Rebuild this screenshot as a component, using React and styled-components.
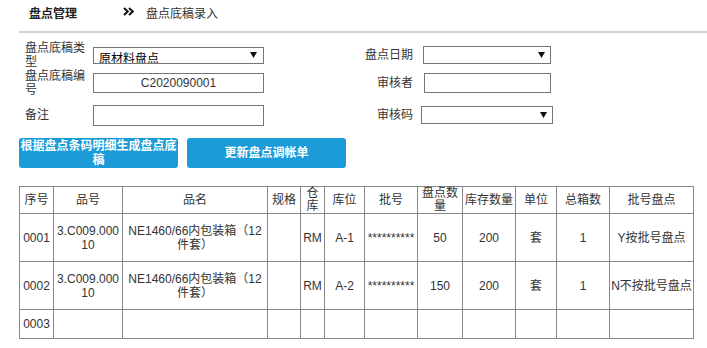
import React from "react";
import styled, { createGlobalStyle } from "styled-components";

const GlobalStyle = createGlobalStyle`
  html, body { margin: 0; padding: 0; background: #fff; }
  body {
    font-family: "Liberation Sans", "Noto Sans CJK SC", sans-serif;
    font-size: 12px;
    color: #333;
    text-spacing-trim: space-all;
  }
  * { box-sizing: border-box; }
`;

const Page = styled.div`
  width: 707px;
  height: 348px;
  overflow: hidden;
`;

const Header = styled.div`
  display: flex;
  align-items: center;
  height: 33px;
  margin-left: 19px;
  padding: 0 0 4px 10px;
  border-bottom: 2px solid #d2d2d2;
  line-height: 14px;
`;

const Title = styled.div`
  width: 94px;
  font-weight: bold;
  color: #222;
`;

const Chevron = styled.svg`
  width: 11px;
  height: 9px;
  margin: 0 12px 4px 0;
`;

const Crumb = styled.div`
  color: #333;
`;

const FormGrid = styled.div`
  display: grid;
  grid-template-columns: 68px 171px 159px auto;
  grid-template-rows: 28px 28px 36px;
  align-items: center;
  margin: 8px 0 0 25px;
`;

const Label = styled.div`
  line-height: 14px;
  color: #333;
  text-align: ${(p) => (p.$right ? "right" : "left")};
  padding-right: ${(p) => (p.$right ? "10px" : "4px")};
`;

const SelectBox = styled.div`
  display: flex;
  justify-content: space-between;
  width: ${(p) => p.$w}px;
  height: ${(p) => p.$h || 17}px;
  margin-left: ${(p) => p.$ml || 0}px;
  border: 1px solid #767676;
  background: #fff;
  overflow: hidden;
`;

const SelectText = styled.span`
  padding: 4px 0 0 5px;
  line-height: 14px;
  color: #000;
  white-space: nowrap;
`;

const Arrow = styled.svg`
  width: 7px;
  height: 6px;
  align-self: center;
  margin-right: ${(p) => p.$mr || 5}px;
  flex-shrink: 0;
`;

const TextInput = styled.input`
  display: block;
  width: ${(p) => p.$w}px;
  height: ${(p) => p.$h}px;
  margin: 0 0 0 ${(p) => p.$ml || 0}px;
  padding: 0;
  border: 1px solid #767676;
  border-radius: 0;
  font: inherit;
  font-size: 12px;
  color: #333;
  text-align: center;
  outline: none;
  background: #fff;
`;

const ButtonRow = styled.div`
  display: flex;
  gap: 9px;
  margin: 5px 0 0 19px;
`;

const ActionButton = styled.button`
  width: 159px;
  height: 30px;
  padding: 0;
  border: none;
  border-radius: 3px;
  background: #1b9bd7;
  color: #fff;
  font-family: inherit;
  font-size: 12px;
  font-weight: bold;
  line-height: 14px;
  cursor: pointer;
`;

const Table = styled.table`
  width: 675px;
  margin: 18px 0 0 19px;
  border-collapse: collapse;
  table-layout: fixed;
  border: 1px solid #888;
`;

const Row = styled.tr`
  height: ${(p) => p.$h}px;
`;

const Cell = styled.td`
  border: 1px solid #888;
  padding: 0 1px;
  text-align: center;
  vertical-align: middle;
  line-height: ${(p) => (p.$head ? 13 : 14)}px;
  word-break: break-all;
  color: #333;
  font-weight: normal;
`;

const widths = [34, 69, 145, 33, 24, 40, 53, 45, 53, 41, 53, 84];
const heads = ["序号", "品号", "品名", "规格", "仓库", "库位", "批号", "盘点数量", "库存数量", "单位", "总箱数", "批号盘点"];
const rows = [
  ["0001", "3.C009.00010", "NE1460/66内包装箱（12件套）", "", "RM", "A-1", "**********", "50", "200", "套", "1", "Y按批号盘点"],
  ["0002", "3.C009.00010", "NE1460/66内包装箱（12件套）", "", "RM", "A-2", "**********", "150", "200", "套", "1", "N不按批号盘点"],
];

const DownArrow = ({ mr }) => (
  <Arrow viewBox="0 0 7 6" $mr={mr}>
    <polygon points="0,0 7,0 3.5,6" fill="#111" />
  </Arrow>
);

export default function App() {
  return (
    <Page>
      <GlobalStyle />
      <Header>
        <Title>盘点管理</Title>
        <Chevron viewBox="0 0 11 9">
          <path d="M1 1 L4.8 4.5 L1 8 M6 1 L9.8 4.5 L6 8" fill="none" stroke="#111" strokeWidth="2" />
        </Chevron>
        <Crumb>盘点底稿录入</Crumb>
      </Header>

      <FormGrid>
        <Label>盘点底稿类型</Label>
        <SelectBox $w={171}>
          <SelectText>原材料盘点</SelectText>
          <DownArrow mr={6} />
        </SelectBox>
        <Label $right>盘点日期</Label>
        <SelectBox $w={128} $h={18}>
          <SelectText />
          <DownArrow mr={5} />
        </SelectBox>

        <Label>盘点底稿编号</Label>
        <TextInput $w={171} $h={20} readOnly value="C2020090001" />
        <Label $right>审核者</Label>
        <TextInput $w={127} $h={20} $ml={1} readOnly value="" />

        <Label>备注</Label>
        <TextInput $w={171} $h={21} readOnly value="" />
        <Label $right>审核码</Label>
        <SelectBox $w={132} $h={18} $ml={-2}>
          <SelectText />
          <DownArrow mr={5} />
        </SelectBox>
      </FormGrid>

      <ButtonRow>
        <ActionButton>根据盘点条码明细生成盘点底稿</ActionButton>
        <ActionButton>更新盘点调帐单</ActionButton>
      </ButtonRow>

      <Table>
        <colgroup>
          {widths.map((w, i) => (
            <col key={i} style={{ width: w }} />
          ))}
        </colgroup>
        <tbody>
          <Row $h={27}>
            {heads.map((h) => (
              <Cell as="th" $head key={h}>{h}</Cell>
            ))}
          </Row>
          {rows.map((r) => (
            <Row $h={48} key={r[0]}>
              {r.map((c, i) => (
                <Cell key={i}>{c}</Cell>
              ))}
            </Row>
          ))}
          <Row $h={29}>
            <Cell>0003</Cell>
            {widths.slice(1).map((_, i) => (
              <Cell key={i} />
            ))}
          </Row>
        </tbody>
      </Table>
    </Page>
  );
}
